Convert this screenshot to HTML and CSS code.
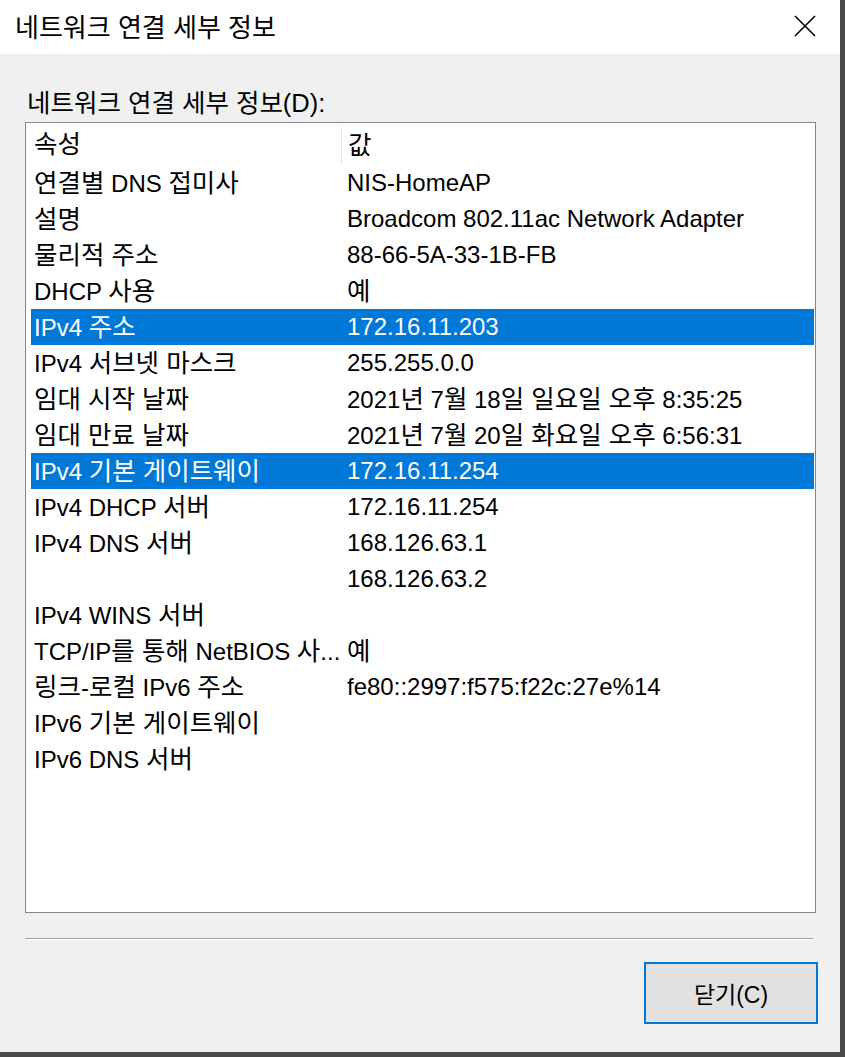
FILE: index.html
```html
<!DOCTYPE html>
<html lang="ko">
<head>
  <meta charset="UTF-8">
  <title>네트워크 연결 세부 정보</title>
  <link rel="stylesheet" href="styles.css">
</head>
<body>
  <div class="window">
    <div class="title-bar">
      <span class="title">네트워크 연결 세부 정보</span>
      <svg class="close" width="22" height="22" viewBox="0 0 22 22">
        <path d="M1 1 L21 21 M21 1 L1 21" stroke="#000" stroke-width="1.6" fill="none"/>
      </svg>
    </div>
    <div class="content">
      <div class="label">네트워크 연결 세부 정보(D):</div>
      <div class="list">
        <div class="row header"><span class="prop"><span class="ko">속성</span></span><span class="val"><span class="ko">값</span></span></div>
        <div class="row"><span class="prop"><span class="ko">연결별</span> DNS <span class="ko">접미사</span></span><span class="val">NIS-HomeAP</span></div>
        <div class="row"><span class="prop"><span class="ko">설명</span></span><span class="val">Broadcom 802.11ac Network Adapter</span></div>
        <div class="row"><span class="prop"><span class="ko">물리적 주소</span></span><span class="val">88-66-5A-33-1B-FB</span></div>
        <div class="row"><span class="prop">DHCP <span class="ko">사용</span></span><span class="val"><span class="ko">예</span></span></div>
        <div class="row selected"><span class="prop">IPv4 <span class="ko">주소</span></span><span class="val">172.16.11.203</span></div>
        <div class="row"><span class="prop">IPv4 <span class="ko">서브넷 마스크</span></span><span class="val">255.255.0.0</span></div>
        <div class="row"><span class="prop"><span class="ko">임대 시작 날짜</span></span><span class="val">2021<span class="ko">년</span> 7<span class="ko">월</span> 18<span class="ko">일 일요일 오후</span> 8:35:25</span></div>
        <div class="row"><span class="prop"><span class="ko">임대 만료 날짜</span></span><span class="val">2021<span class="ko">년</span> 7<span class="ko">월</span> 20<span class="ko">일 화요일 오후</span> 6:56:31</span></div>
        <div class="row selected"><span class="prop">IPv4 <span class="ko">기본 게이트웨이</span></span><span class="val">172.16.11.254</span></div>
        <div class="row"><span class="prop">IPv4 DHCP <span class="ko">서버</span></span><span class="val">172.16.11.254</span></div>
        <div class="row"><span class="prop">IPv4 DNS <span class="ko">서버</span></span><span class="val">168.126.63.1</span></div>
        <div class="row"><span class="prop"></span><span class="val">168.126.63.2</span></div>
        <div class="row"><span class="prop">IPv4 WINS <span class="ko">서버</span></span><span class="val"></span></div>
        <div class="row"><span class="prop">TCP/IP<span class="ko">를 통해</span> NetBIOS <span class="ko">사</span>...</span><span class="val"><span class="ko">예</span></span></div>
        <div class="row"><span class="prop"><span class="ko">링크</span>-<span class="ko">로컬</span> IPv6 <span class="ko">주소</span></span><span class="val">fe80::2997:f575:f22c:27e%14</span></div>
        <div class="row"><span class="prop">IPv6 <span class="ko">기본 게이트웨이</span></span><span class="val"></span></div>
        <div class="row"><span class="prop">IPv6 DNS <span class="ko">서버</span></span><span class="val"></span></div>
      </div>
      <div class="separator"></div>
      <div class="buttons">
        <button class="close-button">닫기(C)</button>
      </div>
    </div>
  </div>
</body>
</html>
```

FILE: styles.css
```css
body, html {
  margin: 0;
  padding: 0;
  font-family: "Liberation Sans", "Noto Sans CJK KR", sans-serif;
  background-color: #f0f0f0;
}

.window {
  width: 840px;
  height: 1052px;
  border-right: 5px solid #4a4a4a;
  border-bottom: 5px solid #4a4a4a;
  background-color: #f0f0f0;
  display: flex;
  flex-direction: column;
}

.title-bar {
  height: 54px;
  background-color: #fff;
  display: flex;
  align-items: center;
  justify-content: space-between;
  padding: 0 24px 0 15px;
}

.title {
  font-size: 26px;
  color: #000;
  margin-top: -3px;
}

.close {
  margin-top: -2px;
}

.content {
  padding: 0 24px 0 25px;
  display: flex;
  flex-direction: column;
}

.label {
  font-size: 25.5px;
  height: 34px;
  line-height: 34px;
  margin-top: 32px;
  padding-left: 2px;
  color: #000;
}

.list {
  height: 791px;
  background-color: #fff;
  border: 1px solid #828790;
  padding: 6px 1px 0 5px;
  box-sizing: border-box;
  margin-top: 2px;
}

.row {
  display: flex;
  height: 36px;
  line-height: 34px;
  align-items: center;
  font-size: 24px;
  color: #000;
  white-space: nowrap;
}

.ko {
  font-size: 25.5px;
}

.row.header {
  height: 37px;
  margin-top: -2px;
  margin-bottom: 1px;
}

.prop {
  width: 307px;
  padding-left: 3px;
  flex-shrink: 0;
}

.header .prop {
  height: 37px;
  border-right: 1px solid #e5e5e5;
}

.val {
  padding-left: 6px;
}

.row.selected {
  background-color: #0078d7;
  color: #fff;
}

.separator {
  margin-top: 25px;
  height: 1px;
  width: 788px;
  background-color: #a0a0a0;
  border-bottom: 1px solid #fff;
}

.buttons {
  display: flex;
  justify-content: flex-end;
  margin-top: 22px;
}

.close-button {
  width: 174px;
  height: 62px;
  margin-right: -2px;
  background-color: #e1e1e1;
  border: 2px solid #0078d7;
  font-family: "Liberation Sans", "Noto Sans CJK KR", sans-serif;
  font-size: 23px;
  color: #000;
}
```
